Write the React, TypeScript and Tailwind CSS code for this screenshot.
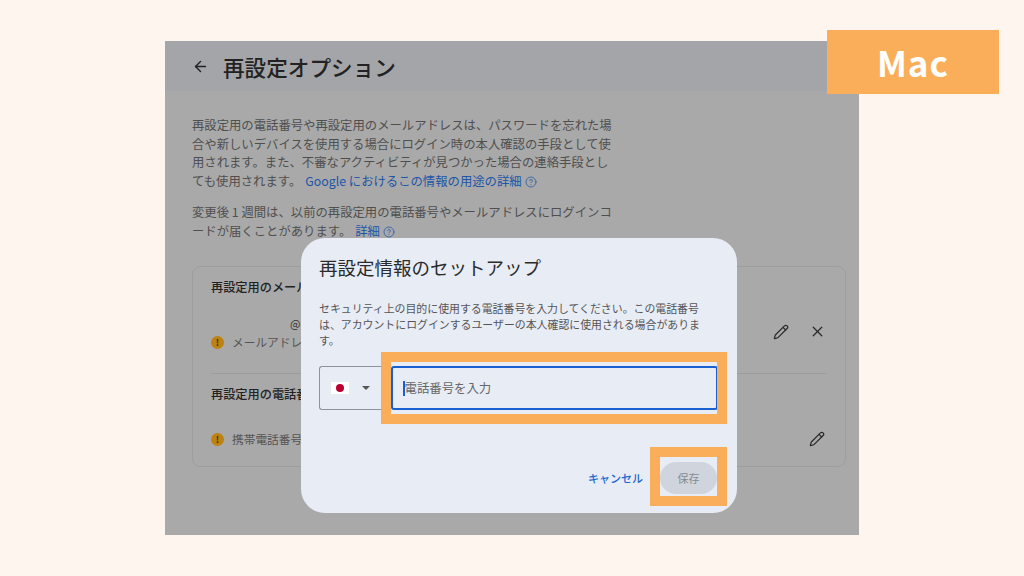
import { ArrowLeft, CircleHelp, Pencil, X } from "lucide-react";

const JP = "font-['Noto_Sans_CJK_JP','Noto_Sans',sans-serif]";

function Warn({ text }: { text: string }) {
  return (
    <div className="flex items-center gap-[8px]">
      <div className="flex h-[13px] w-[13px] items-center justify-center rounded-full bg-[#bd820f] text-[9px] font-bold leading-none text-[#3a3020]">
        !
      </div>
      <span className="whitespace-nowrap text-[11.7px] leading-[16px] text-[#555]">{text}</span>
    </div>
  );
}

function Annotation({ className }: { className: string }) {
  return <div className={`absolute border-[10px] border-[#fbae5a] ${className}`} />;
}

export default function App() {
  return (
    <div className={`${JP} relative h-[576px] w-[1024px] overflow-hidden bg-[#fff5ef] pl-[165px] pt-[41px]`}>
      <div className="h-[494px] w-[694px] bg-[#a9a9a9]">
        <div className="flex h-[50px] items-center bg-[#a4a5a9] pl-[27px] pt-[1px]">
          <ArrowLeft className="h-[17px] w-[17px] text-[#222]" strokeWidth={2} />
          <h1 className="ml-[14px] text-[21.6px] font-medium leading-none text-[#222]">再設定オプション</h1>
        </div>

        <div className="px-[27px] pt-[25px] text-[12.35px] leading-[18.7px] text-[#4f4f4f]">
          <p className="whitespace-nowrap">
            再設定用の電話番号や再設定用のメールアドレスは、パスワードを忘れた場
            <br />
            合や新しいデバイスを使用する場合にログイン時の本人確認の手段として使
            <br />
            用されます。また、不審なアクティビティが見つかった場合の連絡手段とし
            <br />
            ても使用されます。
            <span className="ml-[4px] text-[#1d55a8]">
              Google におけるこの情報の用途の詳細
              <CircleHelp className="ml-[3px] inline h-[12px] w-[12px] align-[-2px]" strokeWidth={1.5} />
            </span>
          </p>
          <p className="mt-[12px] whitespace-nowrap">
            変更後 1 週間は、以前の再設定用の電話番号やメールアドレスにログインコ
            <br />
            ードが届くことがあります。
            <span className="ml-[4px] text-[#1d55a8]">
              詳細
              <CircleHelp className="ml-[3px] inline h-[12px] w-[12px] align-[-2px]" strokeWidth={1.5} />
            </span>
          </p>

          <div className="mt-[26px] h-[201px] w-[654px] rounded-[8px] border border-[#9e9e9e] px-[18px]">
            <div className="flex h-[107px] flex-col border-b border-[#9b9b9b]">
              <h2 className="mt-[11px] text-[12.2px] font-medium leading-[18px] text-[#222]">再設定用のメール</h2>
              <div className="mt-[19px] flex items-start justify-between">
                <div>
                  <div className="pl-[79px] text-[11px] leading-[16px] text-[#333]">@</div>
                  <div className="mt-[3px]">
                    <Warn text="メールアドレス" />
                  </div>
                </div>
                <div className="mt-[8px] flex items-center gap-[20px] pr-[1px] text-[#2a2a2a]">
                  <Pencil className="h-[16px] w-[16px]" strokeWidth={1.8} />
                  <X className="h-[17px] w-[17px]" strokeWidth={1.8} />
                </div>
              </div>
            </div>
            <h2 className="mt-[11px] text-[12.2px] font-medium leading-[18px] text-[#222]">再設定用の電話番号</h2>
            <div className="mt-[28px] flex items-center justify-between">
              <Warn text="携帯電話番号を" />
              <Pencil className="mr-[2px] h-[16px] w-[16px] text-[#2a2a2a]" strokeWidth={1.8} />
            </div>
          </div>
        </div>
      </div>

      {/* dialog over the dimmed page */}
      <div className="absolute left-[301px] top-[238px] h-[275px] w-[436px] rounded-[24px] bg-[#e8ecf5] px-[18px]">
        <h2 className="mt-[17px] whitespace-nowrap text-[18.5px] leading-[24px] text-[#2b2b2b]">再設定情報のセットアップ</h2>
        <p className="mt-[21px] whitespace-nowrap text-[10.9px] leading-[16px] text-[#555]">
          セキュリティ上の目的に使用する電話番号を入力してください。この電話番号
          <br />
          は、アカウントにログインするユーザーの本人確認に使用される場合がありま
          <br />
          す。
        </p>
        <div className="mt-[18px] flex h-[44px]">
          <div className="flex w-[62px] items-center rounded-l-[3px] border border-r-0 border-[#8f9298] pl-[11px]">
            <div className="flex h-[12px] w-[18px] items-center justify-center bg-white">
              <div className="h-[8px] w-[8px] rounded-full bg-[#bc002d]" />
            </div>
            <div className="ml-[13px] h-0 w-0 border-x-[4px] border-t-[4px] border-x-transparent border-t-[#555]" />
          </div>
          <div className="ml-[10px] flex w-[327px] items-center rounded-[3px] border-2 border-[#1a5fd0] pl-[10px]">
            <div className="h-[15px] w-[1.5px] bg-[#1a5fd0]" />
            <span className="text-[12.4px] text-[#666]">電話番号を入力</span>
          </div>
        </div>
        <div className="mt-[52px] flex items-center justify-end">
          <span className="text-[11px] font-medium text-[#1a66d0]">キャンセル</span>
          <div className="ml-[17px] mr-[2px] flex h-[32px] w-[57px] items-center justify-center rounded-full bg-[#d0d4dc] text-[11px] text-[#858a92]">
            保存
          </div>
        </div>
      </div>

      {/* orange highlight annotations */}
      <Annotation className="left-[381px] top-[352px] h-[72px] w-[346px]" />
      <Annotation className="left-[650px] top-[447px] h-[59px] w-[77px]" />
      <div className="absolute left-[827px] top-[30px] flex h-[64px] w-[172px] items-center justify-center bg-[#fbae5a] text-[35px] font-bold tracking-[1px] text-white">
        Mac
      </div>
    </div>
  );
}
